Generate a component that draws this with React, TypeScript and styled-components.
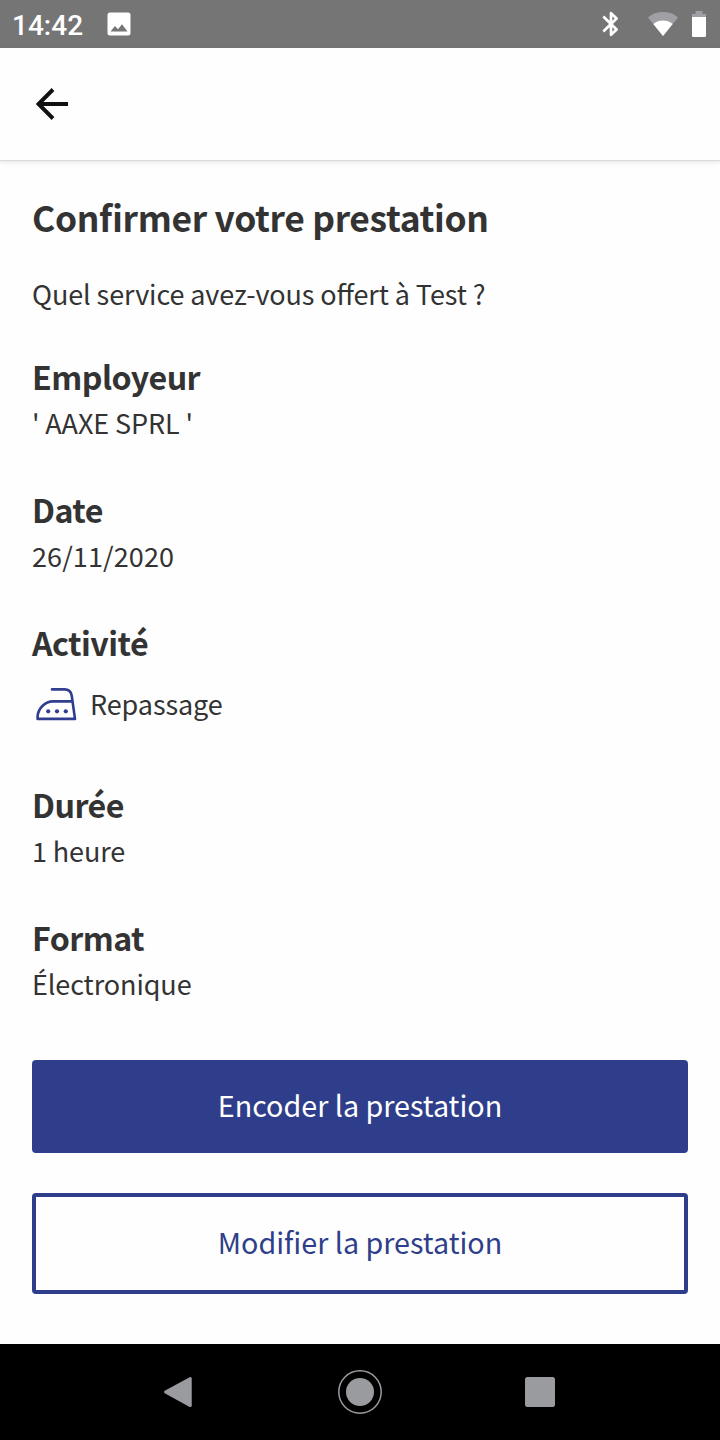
import React from "react";
import styled, { createGlobalStyle } from "styled-components";

const GlobalStyle = createGlobalStyle`
  * { box-sizing: border-box; }
  body { margin: 0; background: #fff; }
`;

const Screen = styled.div`
  display: flex;
  flex-direction: column;
  width: 720px;
  height: 1440px;
  overflow: hidden;
  background: #fefefe;
  color: #333;
  font-family: "Noto Sans CJK JP", "Noto Sans", sans-serif;
  font-feature-settings: "liga" 1;
`;

const StatusBar = styled.div`
  display: flex;
  align-items: center;
  height: 48px;
  padding: 0 14px 0 12px;
  flex: none;
  background: #757575;
  svg { display: block; }
`;

const Clock = styled.span`
  width: 95px;
  padding-top: 4px;
  color: #fff;
  font: 500 28px/32px Roboto, sans-serif;
`;

const StatusIcons = styled.div`
  display: flex;
  align-items: center;
  margin-left: auto;
`;

const StatusSpacer = styled.span<{ $w: number }>`
  width: ${(p) => p.$w}px;
`;

const Header = styled.header`
  display: flex;
  align-items: center;
  height: 112px;
  padding-left: 36px;
  flex: none;
  background: #fefefe;
  box-shadow: 0 1px 1px #dcdcdc, 0 2px 6px rgba(0, 0, 0, 0.1);
`;

const BackButton = styled.button`
  display: flex;
  padding: 0;
  border: 0;
  background: none;
`;

const Content = styled.main`
  display: flex;
  flex-direction: column;
  flex: 1;
  padding: 29px 32px 0;
`;

const Title = styled.h1`
  margin: 0 0 29px;
  font-size: 35.4px;
  line-height: 56px;
  font-weight: 700;
  letter-spacing: -0.34px;
`;

const Intro = styled.p`
  margin: 0 0 38px;
  font-size: 27px;
  line-height: 40px;
  letter-spacing: -0.1px;
`;

const Section = styled.section`
  margin-bottom: 42px;
`;

const SectionTitle = styled.h2`
  margin: 0 0 3px;
  font-size: 32.2px;
  line-height: 48px;
  font-weight: 700;
  letter-spacing: -0.55px;
`;

const Value = styled.div<{ $tall?: boolean }>`
  display: flex;
  align-items: center;
  height: ${(p) => (p.$tall ? 69 : 40)}px;
  font-size: 27px;
  line-height: 40px;
  letter-spacing: -0.1px;
  white-space: pre;
  svg { margin: 0 13.5px 0 3.5px; }
`;

const Digits = styled.span`
  letter-spacing: 0.1px;
`;

const Actions = styled.div`
  display: flex;
  flex-direction: column;
  gap: 40px;
  padding-top: 14px;
`;

const ActionButton = styled.button<{ $outline?: boolean }>`
  display: flex;
  align-items: center;
  justify-content: center;
  height: ${(p) => (p.$outline ? 101 : 93)}px;
  padding: 0 0 4px;
  border: ${(p) => (p.$outline ? "4px solid #2f3e8a" : "0")};
  border-radius: 4px;
  background: ${(p) => (p.$outline ? "#fefefe" : "#2f3e8a")};
  color: ${(p) => (p.$outline ? "#2f3e8a" : "#fff")};
  font-family: inherit;
  font-size: 28.7px;
  line-height: 44px;
`;

const NavBar = styled.nav`
  display: flex;
  align-items: center;
  justify-content: center;
  height: 96px;
  flex: none;
  background: #000;
`;

const NavItem = styled.div`
  display: flex;
  justify-content: center;
  width: 180px;
`;

const PictureIcon = () => (
  <svg width="24" height="24" viewBox="0 0 24 24">
    <path
      fill="#fff"
      fillRule="evenodd"
      d="M3 .5H21A2.5 2.5 0 0 1 23.5 3V21A2.5 2.5 0 0 1 21 23.5H3A2.5 2.5 0 0 1 .5 21V3A2.5 2.5 0 0 1 3 .5ZM3.5 19.5H20.5L15 12.2 11 17.3 8 14Z"
    />
  </svg>
);

const BluetoothIcon = () => (
  <svg width="18" height="26" viewBox="0 0 18 26" fill="none" stroke="#fff" strokeWidth="2.7" strokeLinejoin="round">
    <path d="M1.3 5.5 14.6 18.5 9 23.8V2.2L14.6 7.5 1.3 20.5" />
  </svg>
);

const WifiIcon = () => (
  <svg width="30" height="24" viewBox="0 0 30 24">
    <path d="M15 24 0 5.5C8.5-1.8 21.5-1.8 30 5.5Z" fill="#a0a0a4" />
    <path d="M15 24 5.3 12C11 7.4 19 7.4 24.7 12Z" fill="#fff" />
  </svg>
);

const BatteryIcon = () => (
  <svg width="14" height="26" viewBox="0 0 14 26">
    <path d="M0 6V3H3.5V0H10.5V3H14V6Z" fill="#a0a0a4" />
    <path d="M0 6H14V24.8Q14 26 12.8 26H1.2Q0 26 0 24.8Z" fill="#fff" />
  </svg>
);

const BackIcon = () => (
  <svg width="33" height="32" viewBox="0 0 33 32" fill="none" stroke="#111" strokeWidth="3.9">
    <path d="M32 16H3M17 1.5 2.5 16 17 30.5" />
  </svg>
);

const IronIcon = () => (
  <svg width="41" height="34" viewBox="0 0 41 34" fill="none" stroke="#2f3e8f" strokeWidth="2.6" strokeLinejoin="round" strokeLinecap="round">
    <path d="M16 2.4H28.5Q34.6 2.4 35.7 8.5L39 31.9H1.6V29C2.5 21 9 14.4 17 14.4H36.3" />
    <g fill="#2f3e8f" stroke="none">
      <circle cx="12.2" cy="24.3" r="2.1" />
      <circle cx="21" cy="24.3" r="2.1" />
      <circle cx="29.8" cy="24.3" r="2.1" />
    </g>
  </svg>
);

const NavBackIcon = () => (
  <svg width="34" height="32" viewBox="0 0 34 32">
    <path d="M1.5 16 28 1.5V30.5Z" fill="#9a9b9f" stroke="#9a9b9f" strokeWidth="3" strokeLinejoin="round" transform="translate(1 1) scale(.94)" />
  </svg>
);

const NavHomeIcon = () => (
  <svg width="44" height="44" viewBox="0 0 44 44">
    <circle cx="22" cy="22" r="21.2" fill="none" stroke="#9a9b9f" strokeWidth="1.5" />
    <circle cx="22" cy="22" r="14" fill="#9a9b9f" />
  </svg>
);

const NavRecentIcon = () => (
  <svg width="30" height="30" viewBox="0 0 30 30">
    <rect width="30" height="30" rx="2.5" fill="#9a9b9f" />
  </svg>
);

interface Field {
  label: string;
  value: React.ReactNode;
  icon?: React.ReactNode;
}

const fields: Field[] = [
  { label: "Employeur", value: "' AAXE SPRL '" },
  { label: "Date", value: <Digits>26/11/2020</Digits> },
  { label: "Activité", value: "Repassage", icon: <IronIcon /> },
  { label: "Durée", value: "1 heure" },
  { label: "Format", value: "Électronique" },
];

export default function App() {
  return (
    <Screen>
      <GlobalStyle />
      <StatusBar>
        <Clock>14:42</Clock>
        <PictureIcon />
        <StatusIcons>
          <BluetoothIcon />
          <StatusSpacer $w={28} />
          <WifiIcon />
          <StatusSpacer $w={14} />
          <BatteryIcon />
        </StatusIcons>
      </StatusBar>
      <Header>
        <BackButton aria-label="Retour">
          <BackIcon />
        </BackButton>
      </Header>
      <Content>
        <Title>Confirmer votre prestation</Title>
        <Intro>Quel service avez-vous offert à Test ?</Intro>
        {fields.map((field) => (
          <Section key={field.label}>
            <SectionTitle>{field.label}</SectionTitle>
            <Value $tall={Boolean(field.icon)}>
              {field.icon}
              <span>{field.value}</span>
            </Value>
          </Section>
        ))}
        <Actions>
          <ActionButton>Encoder la prestation</ActionButton>
          <ActionButton $outline>Modifier la prestation</ActionButton>
        </Actions>
      </Content>
      <NavBar>
        <NavItem><NavBackIcon /></NavItem>
        <NavItem><NavHomeIcon /></NavItem>
        <NavItem><NavRecentIcon /></NavItem>
      </NavBar>
    </Screen>
  );
}
